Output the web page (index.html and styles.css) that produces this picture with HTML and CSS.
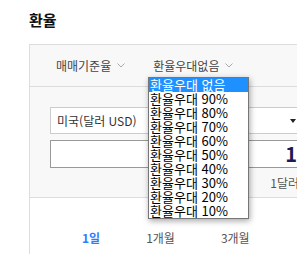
FILE: index.html
```html
<!DOCTYPE html>
<html lang="ko">
<head>
  <meta charset="UTF-8" />
  <meta name="viewport" content="width=device-width, initial-scale=1.0"/>
  <title>환율</title>
  <link rel="stylesheet" href="styles.css">
</head>
<body>
  <h2 class="title">환율</h2>

  <div class="box">
    <div class="tabs">
      <div class="tab">매매기준율
        <svg class="chev" width="8" height="5" viewBox="0 0 8 5"><polyline points="0.5,0.5 4,4 7.5,0.5" /></svg>
      </div>
      <div class="tab">환율우대없음
        <svg class="chev" width="8" height="5" viewBox="0 0 8 5"><polyline points="0.5,0.5 4,4 7.5,0.5" /></svg>
      </div>
    </div>

    <div class="converter">
      <div class="select">미국(달러 USD)<span class="arrow"></span></div>
      <div class="amount">1</div>
      <div class="unit">1달러</div>
    </div>

    <ul class="periods">
      <li class="active">1일</li>
      <li>1개월</li>
      <li>3개월</li>
    </ul>

    <!-- open select list -->
    <ul class="dropdown">
      <li class="selected">환율우대 없음</li>
      <li>환율우대 90%</li>
      <li>환율우대 80%</li>
      <li>환율우대 70%</li>
      <li>환율우대 60%</li>
      <li>환율우대 50%</li>
      <li>환율우대 40%</li>
      <li>환율우대 30%</li>
      <li>환율우대 20%</li>
      <li>환율우대 10%</li>
    </ul>
  </div>
</body>
</html>
```

FILE: styles.css
```css
html, body {
  overflow: hidden;
}

body {
  margin: 0;
  padding-left: 29px;
  font-family: "Noto Sans CJK KR", "Noto Sans", sans-serif;
  color: #333;
  background: #fff;
}

.title {
  margin: 10px 0 14px;
  font-size: 15px;
  line-height: 20px;
  font-weight: bold;
  color: #111;
}

.box {
  position: relative;
  width: 300px;
  border-top: 1px solid #ddd;
  border-left: 1px solid #ddd;
  min-height: 220px;
}

/* top tabs */
.tabs {
  display: flex;
  align-items: center;
  gap: 28px;
  height: 41px;
  padding-left: 26px;
  background: #f8f8f8;
  border-bottom: 1px solid #ddd;
}

.tab {
  display: flex;
  align-items: center;
  gap: 6px;
  font-size: 12px;
  color: #444;
}

.chev {
  fill: none;
  stroke: #aaa;
  stroke-width: 1;
}

/* converter */
.converter {
  background: #f8f8f8;
  padding: 20px 20px 6px;
  border-bottom: 1px solid #ddd;
}

.select {
  position: relative;
  box-sizing: border-box;
  width: 256px;
  height: 27px;
  padding-left: 6px;
  background: #fff;
  border: 1px solid #ccc;
  font-size: 12px;
  line-height: 25px;
  color: #333;
}

.arrow {
  position: absolute;
  right: 9px;
  top: 11px;
  border-left: 3.5px solid transparent;
  border-right: 3.5px solid transparent;
  border-top: 4px solid #222;
}

.amount {
  box-sizing: border-box;
  width: 256px;
  height: 28px;
  margin-top: 6px;
  padding-right: 8px;
  background: #fff;
  border: 1px solid #999;
  text-align: right;
  font-size: 20px;
  font-weight: bold;
  line-height: 26px;
  color: #1c1c50;
}

.unit {
  width: 256px;
  margin-top: 7px;
  padding-right: 7px;
  box-sizing: border-box;
  text-align: right;
  font-size: 12px;
  line-height: 16px;
  color: #555;
}

/* period tabs */
.periods {
  display: flex;
  gap: 46px;
  margin: 0;
  padding: 32px 0 0 52px;
  list-style: none;
  font-size: 12px;
  line-height: 16px;
  color: #555;
}

.periods .active {
  color: #2b7fff;
  font-weight: bold;
}

/* open select list */
.dropdown {
  position: absolute;
  left: 118px;
  top: 32px;
  width: 99px;
  margin: 0;
  padding: 0;
  list-style: none;
  background: #fff;
  border: 1px solid #767676;
  box-shadow: 1px 2px 6px rgba(0, 0, 0, 0.35);
  font-size: 13px;
  line-height: 14px;
  color: #000;
}

.dropdown li {
  height: 14px;
  padding-left: 1px;
  white-space: nowrap;
}

.dropdown .selected {
  background: #1e90ff;
  color: #fff;
}
```
